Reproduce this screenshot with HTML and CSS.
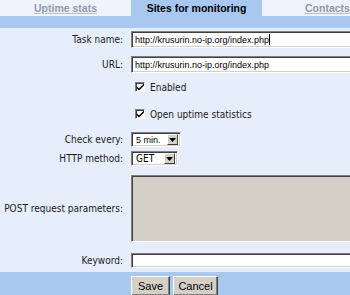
FILE: index.html
```html
<!DOCTYPE html>
<html lang="en">
<head>
    <meta charset="UTF-8">
    <title>Sites for monitoring</title>
    <link rel="stylesheet" href="styles.css">
</head>
<body>
    <!-- Onglets -->
    <div class="tabs">
        <a class="tab" href="#">Uptime stats</a>
        <span class="tab tab-active">Sites for monitoring</span>
        <a class="tab" href="#">Contacts</a>
    </div>
    <div class="band"></div>

    <form class="site-form">
        <div class="row row-task">
            <label class="label" for="task">Task name:</label>
            <div class="field">
                <input class="text-input" type="text" id="task" value="http://krusurin.no-ip.org/index.php">
                <span class="caret"></span>
            </div>
        </div>

        <div class="row row-url">
            <label class="label" for="url">URL:</label>
            <div class="field">
                <input class="text-input" type="text" id="url" value="http://krusurin.no-ip.org/index.php">
            </div>
        </div>

        <div class="row row-check">
            <span class="label"></span>
            <label class="check-label">
                <span class="check">
                    <svg width="7" height="7" viewBox="0 0 7 7"><path d="M0 2.5 L0 4.5 L2 6.5 L7 1.5 L7 -0.5 L2 4.5 Z" fill="#000"/></svg>
                </span>
                Enabled
            </label>
        </div>

        <div class="row row-check row-check2">
            <span class="label"></span>
            <label class="check-label">
                <span class="check">
                    <svg width="7" height="7" viewBox="0 0 7 7"><path d="M0 2.5 L0 4.5 L2 6.5 L7 1.5 L7 -0.5 L2 4.5 Z" fill="#000"/></svg>
                </span>
                Open uptime statistics
            </label>
        </div>

        <div class="row row-every">
            <span class="label">Check every:</span>
            <span class="combo combo-every">
                <span class="combo-value combo-small">5 min.</span>
                <span class="combo-button">
                    <svg width="7" height="4" viewBox="0 0 7 4"><path d="M0 0 H7 L3.5 4 Z" fill="#000"/></svg>
                </span>
            </span>
        </div>

        <div class="row row-method">
            <span class="label">HTTP method:</span>
            <span class="combo combo-method">
                <span class="combo-value">GET</span>
                <span class="combo-button">
                    <svg width="7" height="4" viewBox="0 0 7 4"><path d="M0 0 H7 L3.5 4 Z" fill="#000"/></svg>
                </span>
            </span>
        </div>

        <div class="row row-post">
            <label class="label" for="post">POST request parameters:</label>
            <textarea class="post-area" id="post" disabled></textarea>
        </div>

        <div class="row row-keyword">
            <label class="label" for="keyword">Keyword:</label>
            <input class="text-input keyword-input" type="text" id="keyword">
        </div>
    </form>

    <div class="footer">
        <button class="btn btn-save" type="button">Save</button>
        <button class="btn btn-cancel" type="button">Cancel</button>
    </div>
</body>
</html>
```

FILE: styles.css
```css
/* Réinitialisation */
* {
    margin: 0;
    padding: 0;
    box-sizing: border-box;
}

html, body {
    overflow: hidden;
}

body {
    width: 350px;
    height: 295px;
    background: #e6eefc;
    font-family: "DejaVu Sans Condensed", "DejaVu Sans", sans-serif;
    font-stretch: condensed;
    font-size: 10px;
    color: #1a1a1a;
}

/* Onglets */
.tabs {
    display: flex;
    height: 16px;
    background: #a9c8f0;
    overflow: hidden;
}

.tab {
    flex: 0 0 131px;
    text-align: center;
    line-height: 16px;
    background: #eef3fc;
    font-family: "Liberation Sans", Arial, sans-serif;
    font-size: 10.5px;
    font-weight: bold;
    color: #8e9aaa;
    text-decoration: underline;
    text-decoration-color: #b4bdc8;
}

.tab-active {
    background: #a9c8f0;
    color: #000;
    text-decoration: none;
}

.band {
    height: 12px;
    background: #a9c8f0;
}

/* Formulaire */
.site-form {
    padding: 3px 0 4px;
    overflow: hidden;
}

.row {
    display: flex;
    align-items: center;
}

.label {
    flex: 0 0 131px;
    padding-right: 8px;
    text-align: right;
}

.row-task { height: 17px; }
.row-url { height: 17px; margin-top: 8px; }
.row-check { height: 14px; margin-top: 7px; }
.row-check2 { margin-top: 13px; }
.row-every { height: 15px; margin-top: 11px; }
.row-method { height: 15px; margin-top: 4px; }
.row-post { height: 67px; margin-top: 9px; }
.row-keyword { height: 15px; margin-top: 11px; }

.field {
    position: relative;
    height: 100%;
}

/* Champs façon Windows classique */
.text-input, .post-area, .combo {
    border: 1px solid;
    border-color: #808080 #ffffff #ffffff #808080;
    box-shadow: inset 1px 1px 0 #404040, inset -1px -1px 0 #d4d0c8;
}

.text-input {
    flex: none;
    width: 240px;
    height: 100%;
    padding: 0 2px 0 3px;
    background: #fff;
    font-family: "Liberation Sans", Arial, sans-serif;
    font-size: 9px;
    color: #000;
    outline: none;
}

.caret {
    position: absolute;
    left: 138px;
    top: 3px;
    width: 1px;
    height: 11px;
    background: #000;
}

.keyword-input {
    height: 15px;
}

.post-area {
    flex: none;
    width: 240px;
    height: 67px;
    background: #d4d0c8;
    resize: none;
}

/* Cases à cocher */
.check-label {
    display: flex;
    align-items: center;
    margin-left: 4px;
}

.check {
    display: flex;
    align-items: center;
    justify-content: center;
    width: 10px;
    height: 10px;
    margin-right: 5px;
    background: #fff;
    border: 1px solid;
    border-color: #808080 #ffffff #ffffff #808080;
    box-shadow: inset 1px 1px 0 #404040;
}

/* Listes déroulantes */
.combo {
    display: flex;
    align-items: center;
    height: 15px;
    padding: 2px;
    background: #fff;
}

.combo-every { width: 50px; }
.combo-method { width: 47px; }

.combo-value {
    flex: 1;
    padding-left: 2px;
    color: #000;
}

.combo-small {
    font-family: "Liberation Sans", Arial, sans-serif;
    font-size: 9px;
}

.combo-button {
    display: flex;
    align-items: center;
    justify-content: center;
    width: 11px;
    height: 11px;
    background: #d4d0c8;
    border: 1px solid;
    border-color: #ffffff #404040 #404040 #ffffff;
}

/* Barre du bas */
.footer {
    display: flex;
    gap: 3px;
    height: 23px;
    padding: 4px 0 0 131px;
    background: #a9c8f0;
}

.btn {
    height: 20px;
    background: #d4d0c8;
    border: 1px solid;
    border-color: #ffffff #404040 #404040 #ffffff;
    box-shadow: inset -1px -1px 0 #808080;
    font-family: "Liberation Sans", Arial, sans-serif;
    font-size: 11px;
    color: #000;
}

.btn-save { width: 39px; }
.btn-cancel { width: 45px; }
```
